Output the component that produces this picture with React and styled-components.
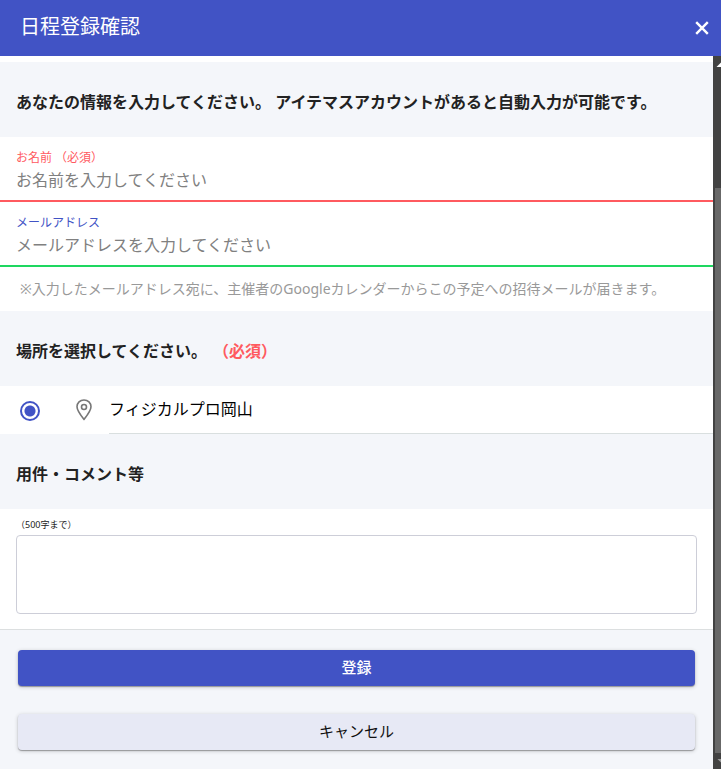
import React, { useState } from 'react';
import styled, { createGlobalStyle } from 'styled-components';

const primary = '#4153c5';
const danger = '#ff5a5f';
const success = '#1ed760';
const pale = '#f4f6fa';

const GlobalStyle = createGlobalStyle`
  * {
    box-sizing: border-box;
  }
  body {
    margin: 0;
    color: #222;
    font-family: "Noto Sans", "Noto Sans CJK JP", sans-serif;
    font-size: 16px;
  }
  button, input, textarea {
    font-family: inherit;
  }
`;

const Modal = styled.div`
  display: flex;
  flex-direction: column;
  min-height: 100vh;
`;

const Header = styled.header`
  display: flex;
  align-items: center;
  justify-content: space-between;
  height: 56px;
  padding: 0 12px 0 20px;
  background: ${primary};
  color: #fff;
`;

const Title = styled.h1`
  margin: 0;
  padding-bottom: 2px;
  font-size: 20px;
  font-weight: 400;
  line-height: 28px;
`;

const CloseButton = styled.button`
  display: flex;
  padding: 0;
  border: 0;
  background: none;
  color: inherit;
  cursor: pointer;
`;

const Body = styled.div`
  display: flex;
  flex: 1;
`;

const Form = styled.form`
  display: flex;
  flex: 1;
  flex-direction: column;
  min-width: 0;
  padding-top: 6px;
`;

const SectionTitle = styled.h2`
  margin: 0;
  padding: 28px 16px 23px;
  background: ${pale};
  font-size: 16px;
  font-weight: 700;
  line-height: 24px;
`;

const Required = styled.span`
  margin-left: 14px;
  color: ${danger};
`;

const Field = styled.div`
  display: flex;
  flex-direction: column;
  height: 65px;
  padding: 12px 16px 0;
  border-bottom: 2px solid ${(props) => props.$line};
`;

const FieldLabel = styled.label`
  color: ${(props) => props.$color};
  font-size: 12px;
  line-height: 18px;
`;

const TextInput = styled.input`
  width: 100%;
  height: 26px;
  padding: 0;
  border: 0;
  outline: 0;
  background: none;
  font-size: 16px;
  &::placeholder {
    color: #808080;
    opacity: 1;
  }
`;

const Note = styled.p`
  margin: 0;
  padding: 12px 20px;
  color: #999;
  font-size: 14px;
  line-height: 20px;
`;

const PlaceRow = styled.label`
  display: flex;
  align-items: center;
  height: 48px;
  padding-left: 20px;
  color: #000;
  cursor: pointer;
`;

const Radio = styled.input`
  appearance: none;
  flex: none;
  width: 20px;
  height: 20px;
  margin: 2px 36px 0 0;
  border: 2px solid ${primary};
  border-radius: 50%;
  &:checked {
    background: radial-gradient(circle, ${primary} 5px, #fff 6px);
  }
`;

const PlaceName = styled.span`
  flex: 1;
  height: 48px;
  margin-left: 17px;
  border-bottom: 1px solid #d9dfdf;
  line-height: 46px;
`;

const CommentArea = styled.div`
  display: flex;
  flex-direction: column;
  padding: 9px 16px 15px;
  border-bottom: 1px solid #dcdfe0;
`;

const CommentLabel = styled.label`
  padding-bottom: 3px;
  font-size: 9px;
  line-height: 14px;
`;

const Comment = styled.textarea`
  height: 79px;
  padding: 8px;
  border: 1px solid #cdced8;
  border-radius: 4px;
  outline: 0;
  resize: none;
  font-size: 16px;
`;

const Actions = styled.div`
  display: flex;
  flex: 1;
  flex-direction: column;
  gap: 28px;
  padding: 20px 18px 19px;
  background: ${pale};
`;

const ActionButton = styled.button`
  height: 36px;
  padding: 0 0 4px;
  border: 0;
  border-radius: 4px;
  background: ${(props) => (props.$primary ? primary : '#e7e9f5')};
  box-shadow: 0 1px 1px rgba(0, 0, 0, 0.3), 0 1px 4px rgba(0, 0, 0, 0.2);
  color: ${(props) => (props.$primary ? '#fff' : '#111')};
  font-size: 15px;
  font-weight: ${(props) => (props.$primary ? 500 : 400)};
  cursor: pointer;
`;

const ScrollBar = styled.div`
  display: flex;
  flex: none;
  flex-direction: column;
  width: 8px;
  padding-left: 2px;
  background: #424242;
`;

const ScrollTrack = styled.div`
  display: flex;
  flex: 1;
  flex-direction: column;
  justify-content: flex-end;
`;

const ScrollThumb = styled.div`
  height: 83%;
  background: #686868;
`;

const ScrollArrow = styled.svg`
  display: block;
  width: 6px;
  height: 16px;
`;

const Pin = () => (
  <svg width="16" height="22" viewBox="0 0 16 22" fill="none" stroke="#777" strokeWidth="1.6" aria-hidden="true">
    <path d="M8 20.5C7 19.2 1 11.9 1 7.8C1 3.9 4.1 1 8 1C11.9 1 15 3.9 15 7.8C15 11.9 9 19.2 8 20.5Z" strokeLinejoin="round" />
    <circle cx="8" cy="8" r="2.5" />
  </svg>
);

function App() {
  const [name, setName] = useState('');
  const [mail, setMail] = useState('');
  const [comment, setComment] = useState('');

  return (
    <>
      <GlobalStyle />
      <Modal>
        <Header>
          <Title>日程登録確認</Title>
          <CloseButton type="button" aria-label="閉じる">
            <svg width="14" height="14" viewBox="0 0 14 14" stroke="currentColor" strokeWidth="2.4">
              <path d="M1.2 1.2L12.8 12.8M12.8 1.2L1.2 12.8" />
            </svg>
          </CloseButton>
        </Header>

        <Body>
          <Form onSubmit={(e) => e.preventDefault()}>
            <SectionTitle>あなたの情報を入力してください。 アイテマスアカウントがあると自動入力が可能です。</SectionTitle>

            <Field $line={danger}>
              <FieldLabel htmlFor="name" $color={danger}>お名前 （必須）</FieldLabel>
              <TextInput id="name" placeholder="お名前を入力してください" value={name} onChange={(e) => setName(e.target.value)} />
            </Field>
            <Field $line={success}>
              <FieldLabel htmlFor="mail" $color={primary}>メールアドレス</FieldLabel>
              <TextInput id="mail" type="email" placeholder="メールアドレスを入力してください" value={mail} onChange={(e) => setMail(e.target.value)} />
            </Field>
            <Note>※入力したメールアドレス宛に、主催者のGoogleカレンダーからこの予定への招待メールが届きます。</Note>

            <SectionTitle>場所を選択してください。<Required>（必須）</Required></SectionTitle>
            <PlaceRow>
              <Radio type="radio" name="place" defaultChecked />
              <Pin />
              <PlaceName>フィジカルプロ岡山</PlaceName>
            </PlaceRow>

            <SectionTitle>用件・コメント等</SectionTitle>
            <CommentArea>
              <CommentLabel htmlFor="comment">（500字まで）</CommentLabel>
              <Comment id="comment" maxLength={500} value={comment} onChange={(e) => setComment(e.target.value)} />
            </CommentArea>

            <Actions>
              <ActionButton type="submit" $primary>登録</ActionButton>
              <ActionButton type="button">キャンセル</ActionButton>
            </Actions>
          </Form>

          <ScrollBar aria-hidden="true">
            <ScrollArrow viewBox="0 0 6 16">
              <path d="M1.5 11L6 6.5V11Z" fill="#fff" />
            </ScrollArrow>
            <ScrollTrack>
              <ScrollThumb />
            </ScrollTrack>
            <ScrollArrow viewBox="0 0 6 16">
              <path d="M2.5 6H6V9.5Z" fill="#999" />
            </ScrollArrow>
          </ScrollBar>
        </Body>
      </Modal>
    </>
  );
}

export default App;
